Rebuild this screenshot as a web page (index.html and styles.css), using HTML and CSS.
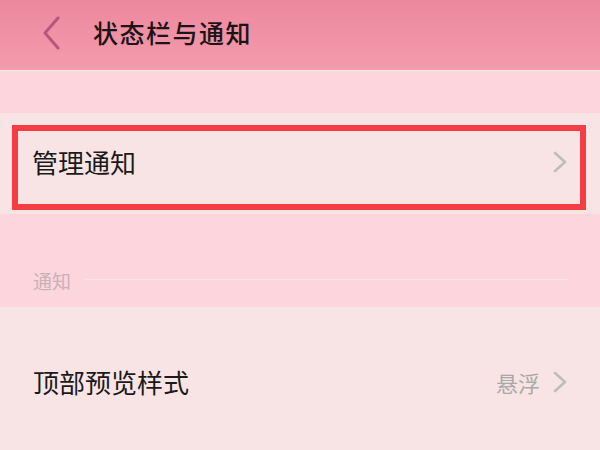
FILE: index.html
```html
<!DOCTYPE html>
<html lang="zh-CN">
<head>
<meta charset="utf-8">
<title>状态栏与通知</title>
<link rel="stylesheet" href="styles.css">
</head>
<body>
<div class="screen">
  <header class="topbar">
    <svg class="back" width="20" height="34" viewBox="0 0 20 34"><path d="M16 2 L3 17 L16 32" fill="none" stroke="#b9577a" stroke-width="3" stroke-linecap="round" stroke-linejoin="round"/></svg>
    <h1 class="title">状态栏与通知</h1>
  </header>
  <div class="gap"></div>
  <section class="row-wrap">
    <div class="highlight">
      <span class="label">管理通知</span>
      <svg class="chev" width="16" height="22" viewBox="0 0 16 22"><path d="M3 2 L13 11 L3 20" fill="none" stroke="#bdbdbd" stroke-width="2.6" stroke-linecap="round" stroke-linejoin="round"/></svg>
    </div>
  </section>
  <div class="section-head">
    <span class="section-label">通知</span>
    <span class="section-line"></span>
  </div>
  <section class="row">
    <span class="label">顶部预览样式</span>
    <span class="value">悬浮</span>
    <svg class="chev" width="16" height="22" viewBox="0 0 16 22"><path d="M3 2 L13 11 L3 20" fill="none" stroke="#bdbdbd" stroke-width="2.6" stroke-linecap="round" stroke-linejoin="round"/></svg>
  </section>
</div>
</body>
</html>
```
FILE: styles.css
```css
html, body {
  margin: 0;
  padding: 0;
}
body {
  width: 600px;
  height: 450px;
  overflow: hidden;
  font-family: "Noto Sans CJK SC", "Noto Sans", sans-serif;
  background: #f8e4e4;
}
.screen {
  display: flex;
  flex-direction: column;
  width: 600px;
  height: 450px;
}
.topbar {
  height: 71px;
  flex: none;
  box-sizing: border-box;
  display: flex;
  align-items: center;
  padding-bottom: 6px;
  background: linear-gradient(180deg, #ee879d 0%, #f29cae 100%);
  border-bottom: 1px solid #fbe6ea;
}
.back {
  margin-left: 42px;
  margin-top: 2px;
}
.title {
  margin: 0 0 0 31px;
  font-size: 25px;
  font-weight: 500;
  color: #1c1416;
  letter-spacing: 1.5px;
  line-height: 1;
}
.gap {
  height: 42px;
  flex: none;
  background: #fdd5dd;
}
.row-wrap {
  flex: none;
  height: 101px;
  box-sizing: border-box;
  padding: 12px 14px 0 12px;
  background: #f8e4e4;
}
.highlight {
  box-sizing: border-box;
  height: 85px;
  border: 6px solid #f53d44;
  display: flex;
  align-items: center;
  justify-content: space-between;
  padding: 0 12px 12px 14px;
}
.label {
  font-size: 26px;
  color: #1a1a1a;
  line-height: 1;
}
.chev {
  flex: none;
}
.section-head {
  flex: none;
  height: 93px;
  box-sizing: border-box;
  background: #fdd5dd;
  display: flex;
  align-items: center;
  padding: 40px 33px 0 33px;
  gap: 14px;
}
.section-label {
  font-size: 19px;
  color: #c7b2b8;
  line-height: 1;
}
.section-line {
  flex: 1;
  height: 1px;
  background: #f8e6ea;
  margin-top: -2px;
}
.row {
  flex: 1;
  display: flex;
  align-items: center;
  padding: 6px 32px 0 33px;
  background: #f8e4e4;
}
.row .label {
  flex: 1;
}
.value {
  font-size: 22px;
  color: #a9a9a9;
  margin-right: 12px;
  line-height: 1;
}
```
